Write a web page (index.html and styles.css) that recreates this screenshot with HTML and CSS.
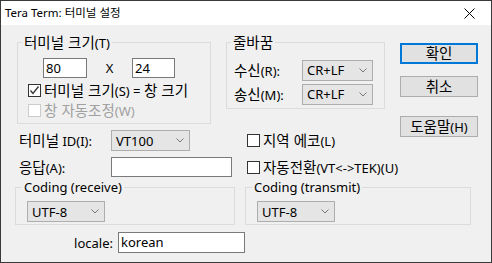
FILE: index.html
```html
<!DOCTYPE html>
<html lang="ko">

<head>
	<meta charset="UTF-8" />
	<title>Tera Term: 터미널 설정</title>
	<link rel="stylesheet" href="styles.css">
</head>

<body>
	<div class="window">
		<div class="titlebar">
			<span>Tera Term: 터미널 설정</span>
			<svg class="close" width="11" height="11" viewBox="0 0 11 11"><path d="M0.5 0.5 L10.5 10.5 M10.5 0.5 L0.5 10.5" stroke="#000" stroke-width="1" fill="none"/></svg>
		</div>

		<div class="content">
			<div class="top">
				<fieldset class="group size-group">
					<legend><span class="ko">터미널 크기</span>(T)</legend>
					<div class="size-row">
						<div class="edit w-cols">80</div>
						<span class="times">X</span>
						<div class="edit w-rows">24</div>
					</div>
					<div class="check-row">
						<span class="cb"><svg width="11" height="11" viewBox="0 0 11 11"><path d="M1.5 5.5 L4 8.5 L9.5 1.5" stroke="#333" stroke-width="1.3" fill="none"/></svg></span>
						<span><span class="ko">터미널 크기</span>(S) = <span class="ko">창 크기</span></span>
					</div>
					<div class="check-row disabled">
						<span class="cb"></span>
						<span><span class="ko">창 자동조정</span>(W)</span>
					</div>
				</fieldset>

				<fieldset class="group newline-group">
					<legend><span class="ko">줄바꿈</span></legend>
					<div class="nl-row">
						<span class="nl-label"><span class="ko">수신</span>(R):</span>
						<div class="combo w-nl">CR+LF<svg class="chev" width="8" height="5" viewBox="0 0 8 5"><path d="M0.5 0.5 L4 4 L7.5 0.5" stroke="#777" fill="none"/></svg></div>
					</div>
					<div class="nl-row">
						<span class="nl-label"><span class="ko">송신</span>(M):</span>
						<div class="combo w-nl">CR+LF<svg class="chev" width="8" height="5" viewBox="0 0 8 5"><path d="M0.5 0.5 L4 4 L7.5 0.5" stroke="#777" fill="none"/></svg></div>
					</div>
				</fieldset>

				<div class="buttons">
					<button class="btn default"><span class="ko">확인</span></button>
					<button class="btn"><span class="ko">취소</span></button>
					<button class="btn help"><span class="ko">도움말</span>(H)</button>
				</div>

				<div class="field-row id-row">
					<div class="field-left">
						<span class="field-label"><span class="ko">터미널</span> ID(I):</span>
						<div class="combo w-id">VT100<svg class="chev" width="8" height="5" viewBox="0 0 8 5"><path d="M0.5 0.5 L4 4 L7.5 0.5" stroke="#777" fill="none"/></svg></div>
					</div>
					<div class="check-row">
						<span class="cb"></span>
						<span><span class="ko">지역 에코</span>(L)</span>
					</div>
				</div>
			</div>

			<div class="field-row answer-row">
				<div class="field-left">
					<span class="field-label"><span class="ko">응답</span>(A):</span>
					<div class="edit w-answer"></div>
				</div>
				<div class="check-row">
					<span class="cb"></span>
					<span><span class="ko">자동전환</span>(VT&lt;-&gt;TEK)(U)</span>
				</div>
			</div>

			<div class="coding-row">
				<fieldset class="group coding-group recv">
					<legend>Coding (receive)</legend>
					<div class="combo w-code">UTF-8<svg class="chev" width="8" height="5" viewBox="0 0 8 5"><path d="M0.5 0.5 L4 4 L7.5 0.5" stroke="#777" fill="none"/></svg></div>
				</fieldset>
				<fieldset class="group coding-group send">
					<legend>Coding (transmit)</legend>
					<div class="combo w-code">UTF-8<svg class="chev" width="8" height="5" viewBox="0 0 8 5"><path d="M0.5 0.5 L4 4 L7.5 0.5" stroke="#777" fill="none"/></svg></div>
				</fieldset>
			</div>

			<div class="locale-row">
				<span class="locale-label">locale:</span>
				<div class="edit w-locale">korean</div>
			</div>
		</div>
	</div>
</body>

</html>
```

FILE: styles.css
```css
body, html {
	margin: 0;
	width: 492px;
	height: 263px;
	overflow: hidden;
	background-color: #f0f0f0;
	font-family: 'Noto Sans', 'Noto Sans CJK KR', sans-serif;
	font-size: 13px;
	line-height: 16px;
	color: #000;
}
/* hangul runs are set a touch larger so they match the dialog font */
.ko {
	font-family: 'Noto Sans CJK KR', sans-serif;
	font-size: 14.5px;
	line-height: 16px;
}
.window {
	box-sizing: border-box;
	width: 492px;
	height: 263px;
	border: 1px solid #3a3a3a;
	background-color: #f0f0f0;
	display: flex;
	flex-direction: column;
}
.titlebar {
	height: 24px;
	background-color: white;
	display: flex;
	align-items: center;
	justify-content: space-between;
	padding: 0 16px 0 4px;
	flex-shrink: 0;
	font-size: 11.5px;
}
.titlebar .close {
	margin-top: 1px;
}
.content {
	padding-top: 9px;
}
.top {
	display: grid;
	grid-template-columns: 194px 159px 78px;
	column-gap: 15px;
	row-gap: 6px;
	margin-left: 16px;
}

/* group boxes */
.group {
	margin: 0;
	padding: 0;
	min-width: 0;
	border: 1px solid #dcdcdc;
	box-sizing: border-box;
}
.group legend {
	margin-left: 0;
	padding: 0 2px;
	line-height: 16px;
}
.size-group {
	height: 90px;
	padding: 7px 0 0 4px;
}
.newline-group {
	height: 75px;
	padding: 6px 0 0 4px;
}

/* edit boxes and combos */
.edit {
	box-sizing: border-box;
	height: 20px;
	background-color: white;
	border: 1px solid #7a7a7a;
	padding: 1px 2px;
	line-height: 16px;
}
.combo {
	box-sizing: border-box;
	height: 21px;
	background-color: #e5e5e5;
	border: 1px solid #adadad;
	padding: 2px 4px;
	line-height: 16px;
	display: flex;
	align-items: center;
	justify-content: space-between;
}
.chev {
	margin-right: 1px;
}

.size-row {
	display: flex;
	align-items: center;
	margin-left: 21px;
}
.w-cols {
	width: 44px;
}
.w-rows {
	width: 43px;
}
.times {
	width: 45px;
	text-align: center;
}

/* checkboxes */
.check-row {
	display: flex;
	align-items: center;
	height: 16px;
	white-space: nowrap;
}
.size-group .check-row {
	margin: 4px 0 0 6px;
}
.cb {
	box-sizing: border-box;
	width: 13px;
	height: 13px;
	border: 1px solid #333;
	background-color: white;
	margin-right: 3px;
	display: flex;
	align-items: center;
	justify-content: center;
	flex-shrink: 0;
}
.check-row.disabled {
	color: #a0a0a0;
}
.check-row.disabled .cb {
	border-color: #cccccc;
}

.nl-row {
	display: flex;
	align-items: center;
	height: 22px;
	margin: 2px 0 0 3px;
}
.nl-label {
	width: 68px;
}
.w-nl {
	width: 71px;
}

/* buttons */
.buttons {
	grid-row: 1 / span 2;
	grid-column: 3;
	display: flex;
	flex-direction: column;
	padding-top: 9px;
}
.btn {
	box-sizing: border-box;
	width: 78px;
	height: 21px;
	margin: 0 0 12px 0;
	padding: 0;
	background-color: #e1e1e1;
	border: 1px solid #adadad;
	font-family: inherit;
	font-size: 13px;
	line-height: 16px;
	color: #000;
}
.btn.default {
	border: 2px solid #0078d7;
}
.btn.help {
	margin-top: 7px;
}

/* ID / answer rows */
.field-row {
	display: flex;
	align-items: center;
	white-space: nowrap;
}
.id-row {
	grid-column: 1 / span 2;
	height: 21px;
}
.answer-row {
	margin: 6px 0 0 16px;
	height: 20px;
}
.field-left {
	width: 230px;
	display: flex;
	align-items: center;
}
.field-label {
	width: 92px;
	padding-left: 2px;
}
.w-id {
	width: 79px;
}
.w-answer {
	width: 121px;
}

/* coding groups */
.coding-row {
	display: flex;
	gap: 10px;
	margin: 2px 0 0 14px;
}
.coding-group {
	height: 46px;
	padding: 6px 0 0 6px;
}
.coding-group.recv {
	width: 220px;
}
.coding-group.send {
	width: 226px;
}
.w-code {
	width: 78px;
	margin-left: 5px;
}

/* locale */
.locale-row {
	display: flex;
	align-items: center;
	margin: 7px 0 0 0;
}
.locale-label {
	width: 112px;
	text-align: right;
	padding-right: 5px;
}
.w-locale {
	width: 127px;
	height: 21px;
}
```
